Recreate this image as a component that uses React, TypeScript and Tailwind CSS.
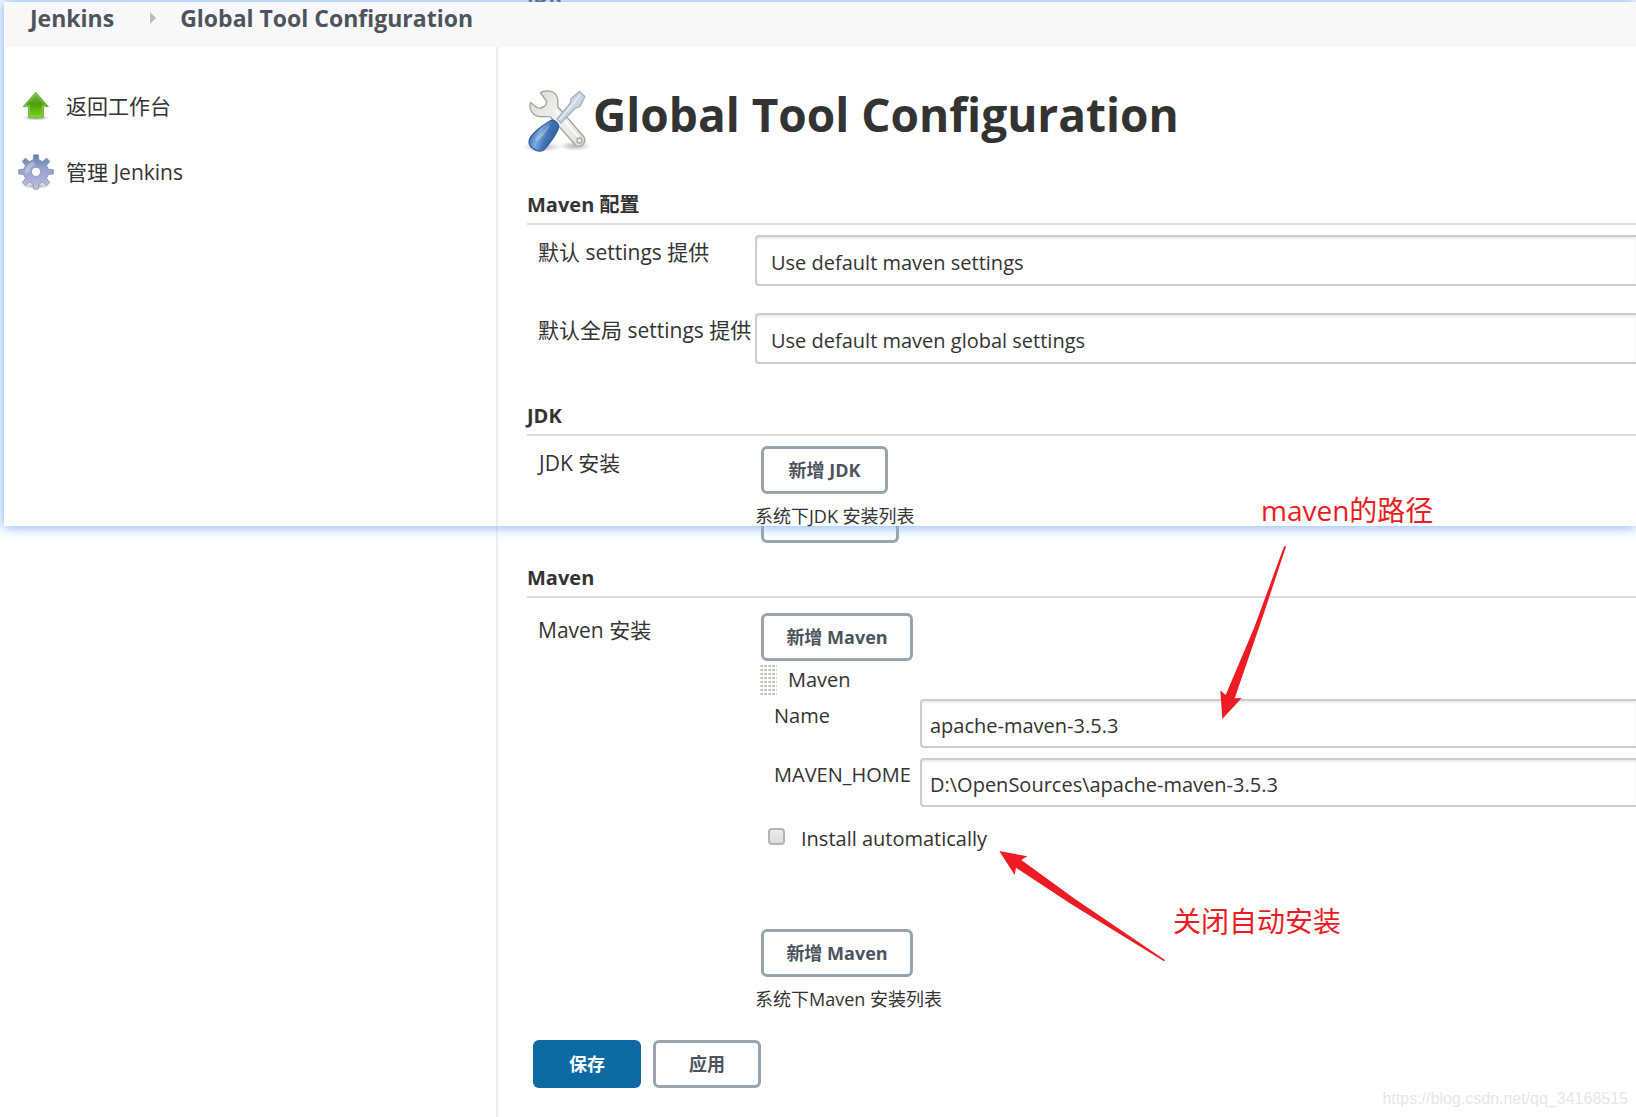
import { useState } from 'react';
import type { ReactNode } from 'react';

function UpArrowIcon() {
  return (
    <svg width="36" height="36" viewBox="0 0 36 36" aria-hidden="true">
      <defs>
        <linearGradient id="up-fill" x1="0" y1="0" x2="0" y2="1">
          <stop offset="0" stopColor="#7cc04a" />
          <stop offset="0.45" stopColor="#4f9f12" />
          <stop offset="1" stopColor="#73d216" />
        </linearGradient>
        <radialGradient id="up-shadow">
          <stop offset="0" stopColor="#000" stopOpacity="0.4" />
          <stop offset="1" stopColor="#000" stopOpacity="0" />
        </radialGradient>
      </defs>
      <ellipse cx="18" cy="30" rx="14" ry="2.5" fill="url(#up-shadow)" />
      <path
        d="M17.8 4.2 L30.3 18.6 H25.4 V29.4 H10.6 V18.6 H5.2 Z"
        fill="url(#up-fill)"
        stroke="#6fb53c"
        strokeWidth="1"
        strokeLinejoin="round"
      />
      <path d="M17.8 6 L28 17.8 H24.4 V28.4 H11.6 V17.8 H7.4 Z" fill="none" stroke="#a4e070" strokeOpacity="0.6" />
    </svg>
  );
}

function GearIcon() {
  return (
    <svg width="36" height="36" viewBox="0 0 36 36" aria-hidden="true">
      <defs>
        <linearGradient id="gear-fill" x1="0" y1="0" x2="0" y2="1">
          <stop offset="0" stopColor="#5f7cae" />
          <stop offset="0.4" stopColor="#93a3cb" />
          <stop offset="0.7" stopColor="#a9acd6" />
          <stop offset="1" stopColor="#c3c3dc" />
        </linearGradient>
        <radialGradient id="gear-shadow">
          <stop offset="0" stopColor="#000" stopOpacity="0.4" />
          <stop offset="1" stopColor="#000" stopOpacity="0" />
        </radialGradient>
      </defs>
      <ellipse cx="18" cy="32" rx="13" ry="3" fill="url(#gear-shadow)" />
      <path
        fill="url(#gear-fill)"
        stroke="#8590b4"
        strokeWidth="0.8"
        strokeLinejoin="round"
        fillRule="evenodd"
        d="M15.6 0.8 H20.4 L21 6 L24.6 7.5 L28.6 4.2 L31.8 7.4 L28.6 11.6 L30.1 15 L35.4 15.8 V19.8 L30.1 20.8 L28.6 24.4 L31.8 28.6 L28.6 31.8 L24.6 28.5 L21 30 L20.2 35.2 H16 L15 30 L11.4 28.5 L7.4 31.8 L4.2 28.6 L7.4 24.4 L5.9 20.8 L0.6 19.8 V15.8 L5.9 15 L7.4 11.6 L4.2 7.4 L7.4 4.2 L11.4 7.5 L15 6 Z M18 13.2 a4.6 4.6 0 1 0 0.01 0 Z"
      />
      <path d="M7 20 A11 11 0 0 1 16 7.5 L17 12 A6.4 6.4 0 0 0 11.5 18 Z" fill="#fff" fillOpacity="0.3" />
    </svg>
  );
}

function ToolsIcon() {
  return (
    <svg width="72" height="72" viewBox="0 0 72 72" aria-hidden="true" className="shrink-0">
      <defs>
        <linearGradient id="wrench-fill" x1="0" y1="0" x2="1" y2="1">
          <stop offset="0" stopColor="#d6d6d4" />
          <stop offset="0.5" stopColor="#f3f3f2" />
          <stop offset="1" stopColor="#dededc" />
        </linearGradient>
        <linearGradient id="handle-fill" x1="0" y1="0.3" x2="1" y2="0.7">
          <stop offset="0" stopColor="#2c5a9c" />
          <stop offset="0.35" stopColor="#7fa9dc" />
          <stop offset="0.6" stopColor="#3f72b4" />
          <stop offset="1" stopColor="#2f5f9f" />
        </linearGradient>
        <radialGradient id="tools-shadow">
          <stop offset="0" stopColor="#000" stopOpacity="0.3" />
          <stop offset="1" stopColor="#000" stopOpacity="0" />
        </radialGradient>
      </defs>
      <ellipse cx="21" cy="63" rx="20" ry="5" fill="url(#tools-shadow)" />
      <ellipse cx="54" cy="62" rx="16" ry="5" fill="url(#tools-shadow)" />
      <path
        d="M19.5 9 C22 6 32 5.5 35.5 11.5 C38 16 36 20 37 23 L63 53 C66 58 60 65 54.5 61 L29.5 33 C25 31.5 18 35 12.5 30 C9 26.500 8.5 22 9.5 18.5 L16 23.5 C20 25.5 26 22 25.5 17 Z"
        fill="url(#wrench-fill)"
        stroke="#a3a3a0"
        strokeWidth="1.3"
        strokeLinejoin="round"
      />
      <path d="M35 27 L58 54" stroke="#fff" strokeWidth="2" strokeOpacity="0.8" />
      <circle cx="58.5" cy="56.5" r="2.6" fill="#ececea" stroke="#a3a3a0" strokeWidth="1.2" />
      <path
        d="M36 35 L49 19.5 L50 14.5 L58.5 7.5 L64 12.5 L59 22.5 L54 24.5 L40 39 Z"
        fill="#c9d5e1"
        stroke="#a3b0be"
        strokeWidth="1.2"
        strokeLinejoin="round"
      />
      <path d="M38 36 L52 20 L59 11" stroke="#e6edf4" strokeWidth="1.5" fill="none" />
      <path
        d="M29 37 C32 34.5 38 38.5 37.5 43 C37 49 30 57 25.5 63 C22 68 17 68 12.5 65 C8 62 7 58 9 54 C12 49 23 40 29 37 Z"
        fill="url(#handle-fill)"
        stroke="#2f5a98"
        strokeWidth="1.2"
      />
      <path d="M14 56 C17 51 24 45 29 41 C27 46 22 52 17 57 Z" fill="#fff" fillOpacity="0.25" />
    </svg>
  );
}

function DragHandle() {
  return (
    <svg width="18" height="32" aria-hidden="true" className="cursor-move">
      <defs>
        <pattern id="grip" width="4" height="4" patternUnits="userSpaceOnUse">
          <rect x="1" y="1" width="3" height="2" fill="#d6d6d3" />
          <rect x="2" y="1" width="2" height="2" fill="#bdbdb9" />
        </pattern>
      </defs>
      <rect width="18" height="32" fill="url(#grip)" />
    </svg>
  );
}

function SectionTitle({ children }: { children: ReactNode }) {
  return <h2 className="border-b-2 border-[#dddddd] pb-1 text-[20px] leading-7 font-bold">{children}</h2>;
}

function OutlineButton({ children, className = '' }: { children: ReactNode; className?: string }) {
  return (
    <button
      type="button"
      className={`h-12 rounded-md border-3 border-[#98a5ae] bg-white text-[18px] font-bold whitespace-nowrap text-[#4d545d] ${className}`}
    >
      {children}
    </button>
  );
}

const selects = [
  { id: 'settings', label: '默认 settings 提供', value: 'Use default maven settings' },
  { id: 'global-settings', label: '默认全局 settings 提供', value: 'Use default maven global settings' },
];

export default function App() {
  const [name, setName] = useState('apache-maven-3.5.3');
  const [home, setHome] = useState('D:\\OpenSources\\apache-maven-3.5.3');
  const [auto, setAuto] = useState(false);

  const inputClass =
    'h-[49px] w-full rounded-l-sm border-2 border-r-0 border-[#cccccc] px-2 pt-1 shadow-[inset_0_2px_2px_rgba(0,0,0,0.08)] outline-none';

  return (
    <div
      lang="zh-CN"
      className="relative min-h-screen overflow-hidden bg-white font-['Open_Sans','Noto_Sans_CJK_SC',sans-serif] text-[20px] leading-7 text-[#333333]"
    >
      {/* Edge of the page behind the window */}
      <div className="flex h-0.5 items-end overflow-hidden pl-[527px] leading-3 font-bold">JDK</div>

      {/* Front window */}
      <div className="relative z-10 ml-1 bg-white shadow-[0_0_12px_1px_#7db2f5]">
        <nav className="flex h-[45px] items-start bg-[#f8f8f8] pl-[26px] text-[23px] leading-8 font-bold text-[#4d545d]">
          <a href="#jenkins">Jenkins</a>
          <svg width="6" height="12" viewBox="0 0 6 12" className="mt-2.5 mr-6 ml-9" aria-hidden="true">
            <path d="M0 0 L6 6 L0 12 Z" fill="#bbbbbb" />
          </svg>
          <a href="#tools">Global Tool Configuration</a>
        </nav>

        <div className="flex">
          <aside className="w-[494px] shrink-0 border-r-2 border-[#e9eef2] pt-[26px] pl-3.5 text-[21px]">
            <a href="#dashboard" className="flex h-[66px] items-center gap-3">
              <UpArrowIcon />
              返回工作台
            </a>
            <a href="#manage" className="flex h-[66px] items-center gap-3">
              <GearIcon />
              管理 Jenkins
            </a>
          </aside>

          <main className="min-w-0 grow pl-[29px]">
            <div className="-ml-1.5 flex items-start pt-[37px]">
              <ToolsIcon />
              <h1 className="text-[46px] leading-[60px] font-bold">Global Tool Configuration</h1>
            </div>

            <div className="mt-[35px]">
              <SectionTitle>Maven 配置</SectionTitle>
              <div className="mt-2.5 space-y-[27px]">
                {selects.map((s) => (
                  <div key={s.id} className="grid grid-cols-[228px_1fr]">
                    <label htmlFor={s.id} className="pt-[3px] pl-[11px] text-[21px] whitespace-nowrap">
                      {s.label}
                    </label>
                    <select
                      id={s.id}
                      className="h-[51px] w-full appearance-none rounded-l-sm border-2 border-r-0 border-[#cccccc] bg-white px-3.5 pt-1 shadow-[inset_0_2px_2px_rgba(0,0,0,0.08)]"
                    >
                      <option>{s.value}</option>
                    </select>
                  </div>
                ))}
              </div>
            </div>

            <div className="mt-[38px]">
              <SectionTitle>JDK</SectionTitle>
              <div className="mt-2.5 grid grid-cols-[228px_1fr]">
                <span className="pt-[3px] pl-3 text-[21px]">JDK 安装</span>
                <div>
                  <OutlineButton className="ml-1.5 w-[127px]">新增 JDK</OutlineButton>
                  <p className="mt-3 text-[18px] leading-5">系统下JDK 安装列表</p>
                </div>
              </div>
            </div>
          </main>
        </div>
      </div>

      {/* Page behind */}
      <div className="flex">
        <div className="w-[498px] shrink-0 border-r-2 border-[#e9eef2]" />
        <form className="min-w-0 grow pb-[29px] pl-[29px]" onSubmit={(e) => e.preventDefault()}>
          <div className="ml-[234px] h-[17px] w-[138px] rounded-b-md border-3 border-t-0 border-[#98a5ae]" />

          <div className="mt-[21px]">
            <SectionTitle>Maven</SectionTitle>
          </div>
          <div className="mt-[15px] grid grid-cols-[228px_1fr]">
            <span className="pt-[3px] pl-[11px] text-[21px]">Maven 安装</span>
            <div>
              <OutlineButton className="ml-1.5 w-[152px]">新增 Maven</OutlineButton>

              <div className="flex h-[38px] items-center gap-[11px] pl-1">
                <DragHandle />
                Maven
              </div>
              <div className="ml-[19px] grid grid-cols-[146px_1fr] gap-y-2.5">
                <label htmlFor="name" className="pt-[3px]">
                  Name
                </label>
                <input
                  id="name"
                  type="text"
                  value={name}
                  onChange={(e) => setName(e.target.value)}
                  className={inputClass}
                />
                <label htmlFor="home" className="pt-[3px]">
                  MAVEN_HOME
                </label>
                <input
                  id="home"
                  type="text"
                  value={home}
                  onChange={(e) => setHome(e.target.value)}
                  className={inputClass}
                />
              </div>
              <div className="mt-[18px] flex items-center gap-4 pl-[13px]">
                <input
                  id="auto"
                  type="checkbox"
                  checked={auto}
                  onChange={(e) => setAuto(e.target.checked)}
                  className="mb-1.5 size-[17px] appearance-none rounded-sm border-2 border-[#b4b4b4] bg-linear-to-b from-[#ececec] to-[#dcdcdc] checked:from-[#0b6aa2] checked:to-[#0b6aa2]"
                />
                <label htmlFor="auto">Install automatically</label>
              </div>

              <OutlineButton className="mt-[76px] ml-1.5 w-[152px]">新增 Maven</OutlineButton>
              <p className="mt-3 text-[18px] leading-5">系统下Maven 安装列表</p>
            </div>
          </div>

          <div className="mt-[31px] ml-1.5 flex gap-3">
            <button type="submit" className="h-12 w-27 rounded-md bg-[#0b6aa2] text-[18px] font-bold text-white">
              保存
            </button>
            <OutlineButton className="w-27">应用</OutlineButton>
          </div>
        </form>
      </div>

      {/* Annotations over the page */}
      <p className="absolute top-[490px] left-[1261px] z-20 text-[28px] leading-10 whitespace-nowrap text-[#ed1c24]">
        maven的路径
      </p>
      <p className="absolute top-[901px] left-[1173px] z-20 text-[28px] leading-10 whitespace-nowrap text-[#ed1c24]">
        关闭自动安装
      </p>
      <svg
        className="pointer-events-none absolute top-[540px] left-[990px] z-20"
        width="310"
        height="430"
        viewBox="990 540 310 430"
        fill="#ed1c24"
        aria-hidden="true"
      >
        <path d="M1284.2 546 L1286 546.6 L1264 613 L1234.7 698.3 L1241.7 698 L1222.3 719 L1220.3 690.3 L1225.7 695 L1254 628 Z" />
        <path d="M999.3 851 L1027.3 856.3 L1021.3 860 L1075 899 L1165 960 L1164 961.3 L1071 904 L1016 867.7 L1014.7 875 Z" />
      </svg>
      <p className="absolute right-2 bottom-2 font-['Liberation_Sans',sans-serif] text-[16px] leading-5 text-[#e6e6e6]">
        https://blog.csdn.net/qq_34168515
      </p>
    </div>
  );
}
